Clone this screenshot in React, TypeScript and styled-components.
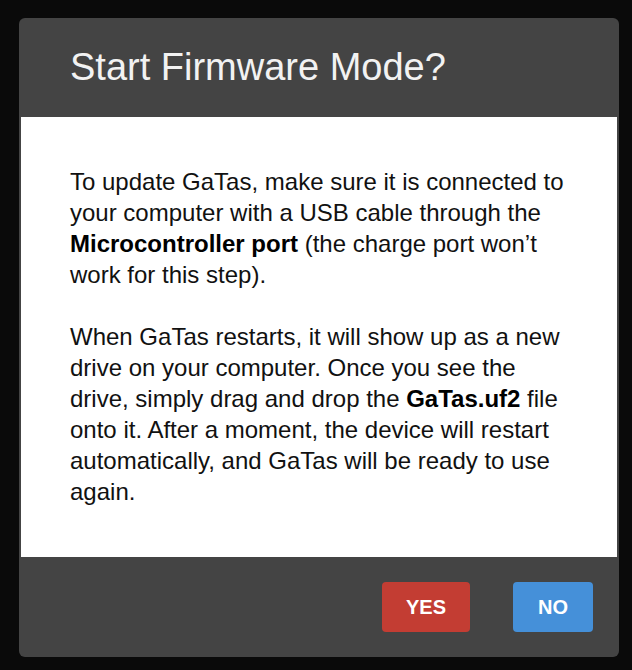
import React from "react";
import styled, { createGlobalStyle } from "styled-components";

const GlobalStyle = createGlobalStyle`
  html, body {
    margin: 0;
    padding: 0;
    background: #0a0a0a;
  }
  body {
    font-family: "Liberation Sans", Arial, sans-serif;
  }
`;

const Page = styled.div`
  width: 632px;
  height: 670px;
  padding: 18px 0 0 19px;
  box-sizing: border-box;
`;

const Dialog = styled.div`
  width: 600px;
  height: 639px;
  background: #444444;
  border-radius: 6px;
  display: flex;
  flex-direction: column;
  overflow: hidden;
`;

const Header = styled.div`
  height: 99px;
  display: flex;
  align-items: center;
  padding: 0 51px;
  h2 {
    margin: 0;
    color: #f2f2f2;
    font-size: 38px;
    font-weight: 400;
  }
`;

const Body = styled.div`
  flex: 1;
  background: #ffffff;
  margin: 0 2px;
  padding: 49px 42px 0 49px;
  color: #111111;
  font-size: 24px;
  line-height: 31px;
  p {
    margin: 0 0 31px;
  }
  strong {
    font-weight: 700;
    color: #000;
  }
`;

const Footer = styled.div`
  height: 100px;
  display: flex;
  align-items: center;
  justify-content: flex-end;
  gap: 43px;
  padding-right: 26px;
`;

const Button = styled.button<{ $tone: "danger" | "primary" }>`
  height: 50px;
  padding: 0 24px;
  min-width: 80px;
  border: none;
  border-radius: 4px;
  background: ${(p) => (p.$tone === "danger" ? "#c33d33" : "#4590d9")};
  color: #ffffff;
  font-family: "Liberation Sans", Arial, sans-serif;
  font-size: 20px;
  font-weight: 700;
  cursor: pointer;
`;

export default function App() {
  return (
    <>
      <GlobalStyle />
      <Page>
        <Dialog>
          <Header>
            <h2>Start Firmware Mode?</h2>
          </Header>
          <Body>
            <p>
              To update GaTas, make sure it is connected to your computer with a
              USB cable through the <strong>Microcontroller port</strong> (the
              charge port won’t work for this step).
            </p>
            <p>
              When GaTas restarts, it will show up as a new drive on your
              computer. Once you see the drive, simply drag and drop the{" "}
              <strong>GaTas.uf2</strong> file onto it. After a moment, the
              device will restart automatically, and GaTas will be ready to use
              again.
            </p>
          </Body>
          <Footer>
            <Button $tone="danger">YES</Button>
            <Button $tone="primary">NO</Button>
          </Footer>
        </Dialog>
      </Page>
    </>
  );
}
